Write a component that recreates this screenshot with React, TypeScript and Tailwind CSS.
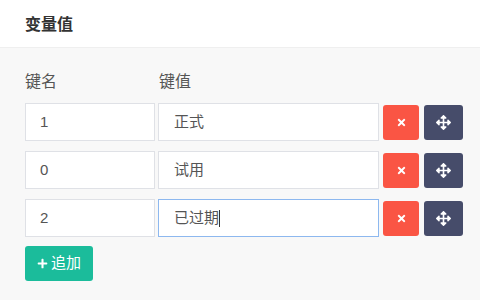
import React from 'react';
import { FaTimes, FaArrowsAlt, FaPlus } from 'react-icons/fa';

const rows = [
  { key: '1', value: '正式' },
  { key: '0', value: '试用' },
  { key: '2', value: '已过期', focused: true },
];

export default function App() {
  return (
    <div
      className="w-[480px] h-[300px] bg-[#f8f8f8] overflow-hidden text-[#555]"
      style={{ fontFamily: '"Liberation Sans", "Noto Sans CJK SC", sans-serif' }}
    >
      <div className="h-[48px] bg-white border-b border-[#efefef] flex items-center px-[25px]">
        <h2 className="text-[16px] font-bold text-[#333] mt-[2px]">变量值</h2>
      </div>

      <div className="pl-[25px] pt-[22px]">
        <div className="flex text-[16px] text-[#555] h-[24px] items-center">
          <div className="w-[134px]">键名</div>
          <div>键值</div>
        </div>

        <div className="mt-[9px] flex flex-col gap-[10px]">
          {rows.map((r) => (
            <div key={r.key} className="flex items-center h-[38px]">
              <div className="shrink-0 w-[130px] h-[38px] bg-white border border-[#dfe1e6] flex items-center px-[14px] text-[15px]">
                {r.key}
              </div>
              <div
                className={
                  'shrink-0 ml-[3px] w-[221px] h-[38px] bg-white border flex items-center px-[15px] text-[15px] ' +
                  (r.focused ? 'border-[#8db8ef]' : 'border-[#dfe1e6]')
                }
              >
                {r.value}
                {r.focused && <span className="w-px h-[17px] bg-[#333]" />}
              </div>
              <button className="shrink-0 ml-[4px] w-[36px] h-[35px] rounded-[3px] bg-[#fa5544] text-white flex items-center justify-center">
                <FaTimes className="w-[11px] h-[11px]" />
              </button>
              <button className="shrink-0 ml-[5px] w-[39px] h-[35px] rounded-[3px] bg-[#464c6a] text-white flex items-center justify-center">
                <FaArrowsAlt className="w-[15px] h-[15px]" />
              </button>
            </div>
          ))}
        </div>

        <button className="mt-[9px] h-[35px] w-[68px] rounded-[3px] bg-[#1bbc9b] text-white text-[15px] flex items-center justify-center gap-[3px]">
          <FaPlus className="w-[11px] h-[11px]" />
          追加
        </button>
      </div>
    </div>
  );
}
